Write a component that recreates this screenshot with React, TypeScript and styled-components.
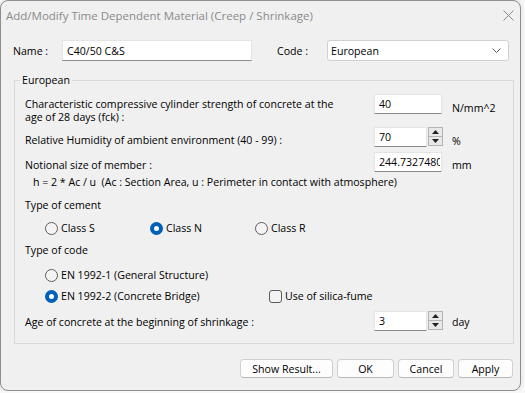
import React from 'react'
import styled, { createGlobalStyle } from 'styled-components'

const GlobalStyle = createGlobalStyle`
	html, body {
		margin: 0;
		padding: 0;
		background: #f8f8f8;
	}
	body {
		font-family: 'Open Sans', 'Noto Sans', sans-serif;
		font-size: 10.6px;
		color: #000;
	}
`

const Window = styled.div`
	box-sizing: border-box;
	width: 521px;
	height: 391px;
	border: 1px solid #8e8e8e;
	border-radius: 8px;
	background: #f0f0f0;
	display: flex;
	flex-direction: column;
	overflow: hidden;
	box-shadow: 0 0 5px rgba(0, 0, 0, 0.12);
`

const TitleBar = styled.div`
	height: 29px;
	flex: none;
	display: flex;
	align-items: center;
	justify-content: space-between;
	padding: 0 6px 0 5px;
	color: #8a8a8a;
	font-size: 11.5px;
`

const Body = styled.div`
	flex: 1;
	display: flex;
	flex-direction: column;
	padding: 10px 6px 0 12px;
`

const TopRow = styled.div`
	display: flex;
	align-items: center;
	height: 21px;
	padding-right: 5px;
`

const TopLabel = styled.span<{ $width: number; $push?: boolean }>`
	flex: none;
	width: ${p => p.$width}px;
	margin-left: ${p => (p.$push ? 'auto' : '0')};
`

const TextInput = styled.input<{ $width: number; $height?: number }>`
	box-sizing: border-box;
	flex: none;
	width: ${p => p.$width}px;
	height: ${p => p.$height ?? 20}px;
	margin: 0;
	padding: 0 1px 0 4px;
	border: 1px solid #e4e4e4;
	border-bottom-color: #8a8a8a;
	border-radius: 1px;
	background: #fff;
	font: inherit;
	color: #000;
	outline: none;
`

const SelectBox = styled.div`
	box-sizing: border-box;
	width: 182px;
	height: 21px;
	display: flex;
	align-items: center;
	justify-content: space-between;
	padding: 0 7px 0 3px;
	border: 1px solid #d0d0d0;
	border-radius: 3px;
	background: #fff;
`

const GroupBox = styled.fieldset`
	margin: 12px 0 0 1px;
	padding: 6px 0 12px 10px;
	border: 1px solid #d9d9d9;
	min-width: 0;
`

const Legend = styled.legend`
	padding: 0 2px;
	margin-left: -5px;
	line-height: 15px;
`

const FieldRow = styled.div<{ $top: number }>`
	display: grid;
	grid-template-columns: 339px 68px 1fr;
	column-gap: 10px;
	align-items: start;
	margin-top: ${p => p.$top}px;
`

const FieldText = styled.div<{ $offset: number }>`
	padding-top: ${p => p.$offset}px;
	line-height: 13px;
`

const SpinBox = styled.div`
	display: flex;
	gap: 1px;
`

const Spinner = styled.div`
	flex: none;
	width: 15px;
	height: 19px;
	display: flex;
	flex-direction: column;
`

const SpinButton = styled.div`
	flex: 1;
	box-sizing: border-box;
	display: flex;
	align-items: center;
	justify-content: center;
	border: 1px solid #b4b4b4;
	background: #e8e8e8;
	& + & {
		border-top: none;
	}
`

const Heading = styled.div<{ $top: number; $indent?: number }>`
	margin-top: ${p => p.$top}px;
	padding-left: ${p => p.$indent ?? 0}px;
	line-height: 13px;
`

const OptionRow = styled.div<{ $top: number }>`
	display: flex;
	align-items: center;
	height: 16px;
	margin-top: ${p => p.$top}px;
	padding-left: 20px;
`

const Option = styled.label<{ $width?: number }>`
	display: flex;
	align-items: center;
	gap: 3px;
	flex: none;
	width: ${p => (p.$width ? `${p.$width}px` : 'auto')};
`

const Radio = styled.span<{ $checked?: boolean }>`
	box-sizing: border-box;
	width: 13px;
	height: 13px;
	border-radius: 50%;
	border: ${p => (p.$checked ? '4px solid #005fb8' : '1px solid #5c5c5c')};
	background: ${p => (p.$checked ? '#fff' : '#f4f4f4')};
`

const CheckBox = styled.span`
	box-sizing: border-box;
	width: 13px;
	height: 13px;
	border-radius: 3px;
	border: 1px solid #5c5c5c;
	background: #f4f4f4;
`

const ButtonRow = styled.div`
	display: flex;
	justify-content: flex-end;
	gap: 4px;
	margin-top: 15px;
	padding-right: 1px;
`

const Button = styled.button<{ $width: number }>`
	box-sizing: border-box;
	width: ${p => p.$width}px;
	height: 19px;
	margin: 0;
	padding: 0;
	border: 1px solid #d0d0d0;
	border-bottom-color: #b9b9b9;
	border-radius: 4px;
	background: #fdfdfd;
	font: inherit;
	color: #000;
`

const ArrowUp = () => (
	<svg width='7' height='4' viewBox='0 0 7 4'>
		<path d='M0 4 L3.5 0 L7 4 Z' fill='#222' />
	</svg>
)

const ArrowDown = () => (
	<svg width='7' height='4' viewBox='0 0 7 4'>
		<path d='M0 0 L3.5 4 L7 0 Z' fill='#222' />
	</svg>
)

const Spin = ({ value }: { value: string }) => (
	<SpinBox>
		<TextInput $width={53} defaultValue={value} />
		<Spinner>
			<SpinButton><ArrowUp /></SpinButton>
			<SpinButton><ArrowDown /></SpinButton>
		</Spinner>
	</SpinBox>
)

const App = () => (
	<>
		<GlobalStyle />
		<Window>
			<TitleBar>
				<span>Add/Modify Time Dependent Material (Creep / Shrinkage)</span>
				<svg width='11' height='11' viewBox='0 0 11 11'>
					<path d='M0.5 0.5 L10.5 10.5 M10.5 0.5 L0.5 10.5' stroke='#8a8a8a' strokeWidth='1' />
				</svg>
			</TitleBar>
			<Body>
				<TopRow>
					<TopLabel $width={49}>Name :</TopLabel>
					<TextInput $width={190} $height={21} defaultValue='C40/50 C&S' />
					<TopLabel $width={50} $push>Code :</TopLabel>
					<SelectBox>
						<span>European</span>
						<svg width='9' height='5' viewBox='0 0 9 5'>
							<path d='M0.5 0.5 L4.5 4.5 L8.5 0.5' fill='none' stroke='#555' strokeWidth='1' />
						</svg>
					</SelectBox>
				</TopRow>

				<GroupBox>
					<Legend>European</Legend>

					<FieldRow $top={0}>
						<FieldText $offset={4}>
							Characteristic compressive cylinder strength of concrete at the<br />
							age of 28 days (fck) :
						</FieldText>
						<TextInput $width={68} defaultValue='40' />
						<FieldText $offset={8}>N/mm^2</FieldText>
					</FieldRow>

					<FieldRow $top={3}>
						<FieldText $offset={7}>Relative Humidity of ambient environment (40 - 99) :</FieldText>
						<Spin value='70' />
						<FieldText $offset={8}>%</FieldText>
					</FieldRow>

					<FieldRow $top={4}>
						<FieldText $offset={7}>Notional size of member :</FieldText>
						<TextInput $width={68} defaultValue='244.73274805' />
						<FieldText $offset={7}>mm</FieldText>
					</FieldRow>

					<Heading $top={4} $indent={8}>
						h = 2 * Ac / u&nbsp;&nbsp;(Ac : Section Area, u : Perimeter in contact with atmosphere)
					</Heading>

					<Heading $top={10}>Type of cement</Heading>
					<OptionRow $top={8}>
						<Option $width={105}><Radio />Class S</Option>
						<Option $width={105}><Radio $checked />Class N</Option>
						<Option><Radio />Class R</Option>
					</OptionRow>

					<Heading $top={8}>Type of code</Heading>
					<OptionRow $top={10}>
						<Option><Radio />EN 1992-1 (General Structure)</Option>
					</OptionRow>
					<OptionRow $top={5}>
						<Option $width={224}><Radio $checked />EN 1992-2 (Concrete Bridge)</Option>
						<Option><CheckBox />Use of silica-fume</Option>
					</OptionRow>

					<FieldRow $top={7}>
						<FieldText $offset={5}>Age of concrete at the beginning of shrinkage :</FieldText>
						<Spin value='3' />
						<FieldText $offset={5}>day</FieldText>
					</FieldRow>
				</GroupBox>

				<ButtonRow>
					<Button $width={93}>Show Result...</Button>
					<Button $width={57}>OK</Button>
					<Button $width={56}>Cancel</Button>
					<Button $width={55}>Apply</Button>
				</ButtonRow>
			</Body>
		</Window>
	</>
)

export default App
